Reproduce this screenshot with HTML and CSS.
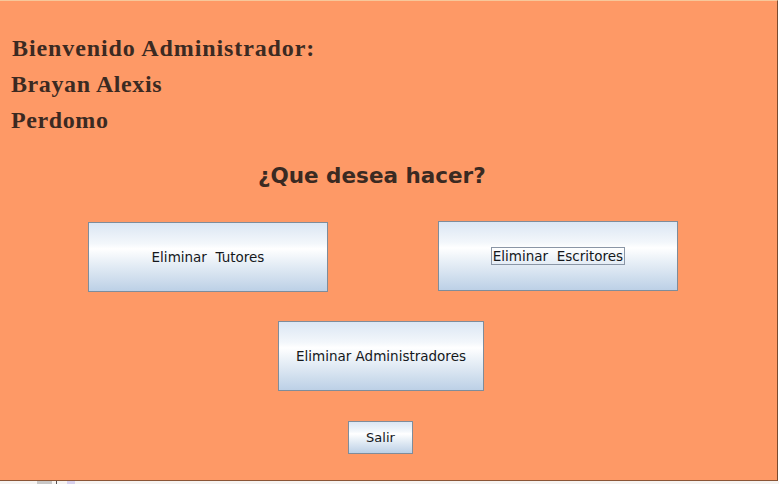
FILE: index.html
```html
<!DOCTYPE html>
<html lang="es">
<head>
<meta charset="utf-8">
<title>Administrador</title>
<link rel="stylesheet" href="styles.css">
</head>
<body>
<div class="screen">
  <div class="window">
    <div class="greeting">
      <div class="line first">Bienvenido Administrador:</div>
      <div class="line">Brayan Alexis</div>
      <div class="line">Perdomo</div>
    </div>
    <div class="question">¿Que desea hacer?</div>
    <div class="row row-top">
      <button class="btn btn-big">Eliminar&nbsp; Tutores</button>
      <button class="btn btn-big btn-right"><span class="focus">Eliminar&nbsp; Escritores</span></button>
    </div>
    <div class="row row-mid">
      <button class="btn btn-admin">Eliminar Administradores</button>
    </div>
    <div class="row row-exit">
      <button class="btn btn-exit">Salir</button>
    </div>
  </div>
  <div class="taskbar">
    <span class="tb-block"></span>
    <span class="tb-line"></span>
    <span class="tb-lav"></span>
  </div>
</div>
</body>
</html>
```

FILE: styles.css
```css
html, body {
  margin: 0;
  padding: 0;
  background: #ffffff;
}
.screen {
  width: 779px;
  height: 484px;
  overflow: hidden;
  display: flex;
  flex-direction: column;
}
.window {
  width: 778px;
  height: 481px;
  background: #fe9966;
  border-right: 1px solid #7a4a2e;
  border-bottom: 1px solid #8a5536;
  box-sizing: border-box;
  border-top: 1px solid #f7c79a;
  padding-top: 29px;
}
.greeting {
  padding-left: 11px;
  font-family: "Liberation Serif", serif;
  font-weight: bold;
  color: #3b2a22;
  font-size: 24px;
  letter-spacing: 0.9px;
}
.line {
  height: 36px;
  line-height: 36px;
  letter-spacing: 0.6px;
}
.line.first {
  padding-left: 1px;
  letter-spacing: 0.9px;
}
.question {
  margin-top: 18px;
  padding-left: 258px;
  font-family: "DejaVu Sans", sans-serif;
  font-weight: bold;
  font-size: 21.5px;
  color: #3a2a22;
  height: 40px;
  line-height: 40px;
}
.row {
  display: flex;
}
.row-top {
  margin-top: 26px;
  padding-left: 88px;
  gap: 110px;
  align-items: flex-start;
}
.row-mid {
  margin-top: 29px;
  padding-left: 278px;
}
.row-exit {
  margin-top: 30px;
  padding-left: 348px;
}
.btn {
  box-sizing: border-box;
  border: 1px solid #7f8c9a;
  border-radius: 0;
  padding: 0;
  margin: 0;
  background: linear-gradient(to bottom, #dbe6f3 0%, #f3f7fb 30%, #ffffff 38%, #e6eef6 60%, #bcd0e6 100%);
  font-family: "DejaVu Sans", sans-serif;
  font-size: 13.5px;
  color: #15181c;
  display: flex;
  align-items: center;
  justify-content: center;
}
.btn-big {
  width: 240px;
  height: 70px;
}
.btn-right {
  margin-top: -1px;
}
.btn-admin {
  width: 206px;
  height: 70px;
}
.btn-exit {
  width: 65px;
  height: 33px;
  font-size: 13px;
}
.focus {
  border: 1px solid #8a96a6;
  padding: 0 1px;
  line-height: 16px;
}
.taskbar {
  flex: 1;
  display: flex;
  align-items: stretch;
  background: #f6f4f2;
}
.tb-block {
  margin-left: 37px;
  width: 15px;
  background: #c8c8c8;
}
.tb-line {
  margin-left: 4px;
  width: 1px;
  background: #555555;
}
.tb-lav {
  margin-left: 10px;
  width: 8px;
  background: #d8d2ef;
}
```
